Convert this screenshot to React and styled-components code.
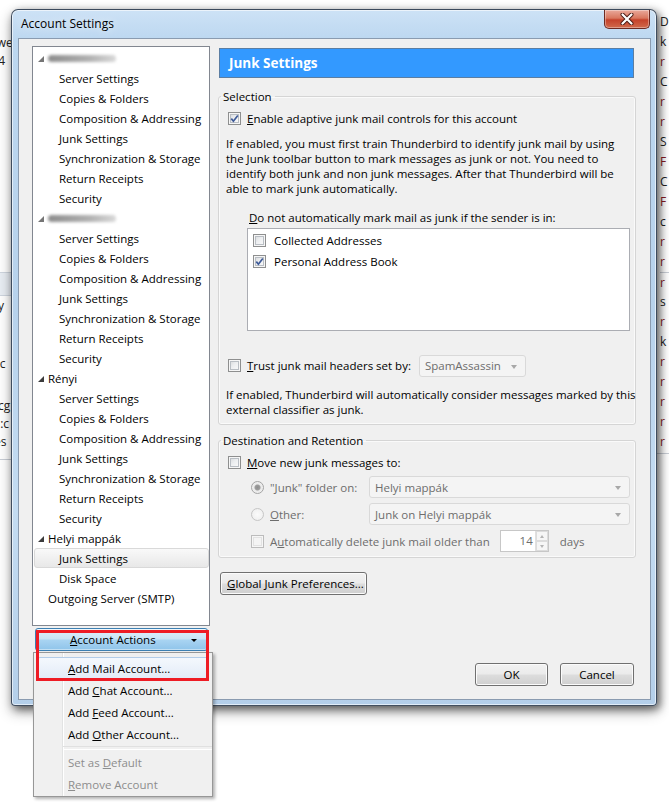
import React from "react";
import styled, { createGlobalStyle } from "styled-components";

const GlobalStyle = createGlobalStyle`
  html, body { margin: 0; padding: 0; background: #fff; }
  body {
    font-family: "Open Sans", "Noto Sans", sans-serif;
    font-size: 11.5px;
    color: #000;
  }
  * { box-sizing: border-box; }
`;

const Desktop = styled.div`
  position: relative;
  width: 669px;
  height: 804px;
  overflow: hidden;
  background: #fff;
  display: flex;
  justify-content: space-between;
`;

const PeekLeft = styled.div`
  width: 14px;
  height: 460px;
  padding-top: 34px;
  font-size: 12px;
  line-height: 18px;
  color: #222;
  overflow: hidden;
  white-space: nowrap;
  border-bottom: 1px solid #c9ced6;
`;

const PeekLine = styled.div`
  margin-top: ${(p) => p.$gap || 0}px;
  height: 18px;
  text-indent: ${(p) => p.$shift || -2}px;
  ${(p) => p.$band && "background: #e9eef4; border-top: 1px solid #cfd6df; border-bottom: 1px solid #cfd6df; height: 24px;"}
`;

const PeekRight = styled.div`
  width: 12px;
  height: 454px;
  padding: 12px 0 0 3px;
  line-height: 20px;
  font-size: 12px;
  overflow: hidden;
  border-bottom: 1px solid #c9ced6;
`;

const PeekLetter = styled.div`
  height: 20px;
  color: ${(p) => (p.$red ? "#8a1c24" : "#222")};
  ${(p) => p.$rule && "border-top: 1px solid #c9ced6;"}
`;

const Window = styled.div`
  position: absolute;
  left: 11px;
  top: 9px;
  width: 646px;
  height: 697px;
  border: 1px solid rgba(20, 30, 45, 0.75);
  border-radius: 7px 7px 4px 4px;
  background: linear-gradient(
    to bottom,
    #cde2f6 0px,
    #bcd7f0 30px,
    #b7d2ec 300px,
    #c4dcf2 500px,
    #b4cfea 100%
  );
  box-shadow: 3px 3px 8px rgba(0, 0, 0, 0.55), 0 6px 14px rgba(0, 0, 0, 0.3),
    inset 0 0 0 1px rgba(255, 255, 255, 0.6);
  display: flex;
  flex-direction: column;
  padding: 0 5px 5px 6px;
`;

const TitleBar = styled.div`
  height: 28px;
  display: flex;
  align-items: center;
  padding-left: 3px;
  padding-bottom: 2px;
`;

const Title = styled.div`
  font-size: 12px;
  color: #000;
  text-shadow: 0 0 8px rgba(255, 255, 255, 0.9);
`;

const CloseButton = styled.div`
  position: absolute;
  top: 0;
  right: 6px;
  width: 46px;
  height: 19px;
  border: 1px solid #6d2a22;
  border-top: none;
  border-radius: 0 0 5px 5px;
  background: linear-gradient(to bottom, #e9a99b 0%, #d9775f 45%, #c5422b 55%, #d16a4c 100%);
  box-shadow: inset 0 0 0 1px rgba(255, 255, 255, 0.35);
  display: flex;
  align-items: center;
  justify-content: center;
`;

const Client = styled.div`
  flex: 1;
  border: 1px solid #8a9bb0;
  background: #f0f0f0;
  display: flex;
  gap: 8px;
  padding: 7px 14px 13px 13px;
`;

const LeftCol = styled.div`
  width: 178px;
  flex: none;
  display: flex;
  flex-direction: column;
`;

const Tree = styled.div`
  height: 580px;
  background: #fff;
  border: 1px solid #828790;
  padding-top: 1px;
  overflow: hidden;
`;

const TreeRow = styled.div`
  height: 20px;
  display: flex;
  align-items: center;
  padding-left: ${(p) => (p.$child ? 25 : 4)}px;
  margin: 0 0 0 1px;
  white-space: nowrap;
  ${(p) =>
    p.$selected &&
    `
    background: linear-gradient(to bottom, #f9f9f9, #e8e8e8);
    border: 1px solid #d9d9d9;
    border-radius: 3px;
    padding-left: 24px;
  `}
`;

const Twisty = styled.svg`
  width: 6px;
  height: 6px;
  margin-right: 4px;
  margin-top: 2px;
  flex: none;
  ${(p) => p.$blur && "filter: blur(0.6px); opacity: 0.7;"}
`;

const BlurName = styled.span`
  display: inline-block;
  width: 68px;
  height: 7px;
  border-radius: 4px;
  background: linear-gradient(to right, #8c8c8c, #b0b0b0 60%, #d8d8d8);
  filter: blur(1.8px);
`;

const PlainTop = styled.div`
  height: 20px;
  display: flex;
  align-items: center;
  padding-left: 15px;
`;

const ActionsButton = styled.div`
  height: 23px;
  margin: 2px 2px 0 3px;
  border: 1px solid #3c7fb1;
  border-radius: 3px;
  background: linear-gradient(to bottom, #e3f1fb 0%, #c9e4f6 48%, #a9d4f2 52%, #8fc4ea 100%);
  box-shadow: inset 0 0 0 1px rgba(255, 255, 255, 0.45);
  display: flex;
  align-items: center;
  padding-left: 34px;
  position: relative;
`;

const DropArrow = styled.span`
  position: absolute;
  right: 10px;
  top: 10px;
  width: 0;
  height: 0;
  border-left: 3px solid transparent;
  border-right: 3px solid transparent;
  border-top: 3px solid #000;
`;

const RightCol = styled.div`
  width: 418px;
  flex: none;
  display: flex;
  flex-direction: column;
`;

const PaneHeader = styled.div`
  height: 30px;
  margin: 2px 2px 0 1px;
  background: #3399ff;
  border: 1px solid #5b7ea3;
  color: #fff;
  font-weight: 700;
  font-size: 13.5px;
  display: flex;
  align-items: center;
  padding-left: 9px;
`;

const Group = styled.fieldset`
  margin: ${(p) => p.$top}px 0 0 0;
  padding: 0 5px ${(p) => p.$bottom}px 8px;
  border: 1px solid #d5d5d5;
  border-radius: 3px;
  box-shadow: inset 0 0 0 1px #fafafa;
  min-width: 0;
`;

const Legend = styled.legend`
  padding: 0 3px 0 2px;
  margin-left: -6px;
  line-height: 15px;
`;

const Row = styled.div`
  display: flex;
  align-items: center;
  height: ${(p) => p.$h || 20}px;
  margin-top: ${(p) => p.$top || 0}px;
  margin-left: ${(p) => p.$indent || 0}px;
  gap: 6px;
  white-space: nowrap;
`;

const Para = styled.div`
  margin-top: ${(p) => p.$top}px;
  margin-left: -1px;
  line-height: 15px;
  white-space: nowrap;
`;

const Check = styled.span`
  flex: none;
  width: 13px;
  height: 13px;
  margin-left: ${(p) => p.$ml || 0}px;
  border: 1px solid ${(p) => (p.$disabled ? "#bcbcbc" : "#8e8f8f")};
  background: ${(p) =>
    p.$disabled
      ? "#f4f4f4"
      : "linear-gradient(135deg, #d2d4d6 0%, #eceef0 45%, #fdfdfd 100%)"};
  box-shadow: inset 0 0 0 1px #f6f6f6, inset 0 0 0 2px ${(p) => (p.$disabled ? "#e2e2e2" : "#b9bec4")};
  display: inline-flex;
  align-items: center;
  justify-content: center;
`;

const Radio = styled.span`
  flex: none;
  width: 13px;
  height: 13px;
  border-radius: 50%;
  border: 1px solid ${(p) => (p.$checked ? "#a4a4a4" : "#c6c6c6")};
  background: ${(p) =>
    p.$checked
      ? "radial-gradient(circle, #8e8e8e 0, #9c9c9c 2.5px, #e9e9e9 3.5px, #f6f6f6 100%)"
      : "radial-gradient(circle, #fbfbfb 0, #ececec 100%)"};
`;

const AddressList = styled.div`
  height: 103px;
  margin: 3px 0 0 20px;
  background: #fff;
  border: 1px solid #abadb3;
  padding: 1px 0 0 5px;
`;

const ListItem = styled.div`
  height: 21px;
  display: flex;
  align-items: center;
  gap: 8px;
`;

const Select = styled.div`
  width: ${(p) => (p.$w ? `${p.$w}px` : "auto")};
  flex: ${(p) => (p.$w ? "none" : 1)};
  margin-left: ${(p) => p.$ml || 0}px;
  height: 22px;
  border: 1px solid #d9d9d9;
  border-radius: 3px;
  background: #f4f4f4;
  color: #6d6d6d;
  display: flex;
  align-items: center;
  padding-left: 5px;
  position: relative;
`;

const SelArrow = styled.span`
  position: absolute;
  right: 8px;
  top: 50%;
  margin-top: -1px;
  border-left: 3.5px solid transparent;
  border-right: 3.5px solid transparent;
  border-top: 4px solid #a8a8a8;
`;

const OptionGrid = styled.div`
  display: grid;
  grid-template-columns: 118px 1fr;
  row-gap: 5px;
  margin: 4px 0 0 24px;
  color: #6d6d6d;
`;

const GridCell = styled.div`
  display: flex;
  align-items: center;
  gap: 6px;
  white-space: nowrap;
  ${(p) => p.$span && "grid-column: 1 / span 2;"}
`;

const NumberBox = styled.div`
  width: 49px;
  height: 22px;
  margin-left: 4px;
  border: 1px solid #c7c7c7;
  background: #fff;
  display: flex;
`;

const NumberText = styled.div`
  flex: 1;
  text-align: right;
  padding-right: 2px;
  line-height: 20px;
  color: #6d6d6d;
`;

const Spinner = styled.div`
  width: 13px;
  display: flex;
  flex-direction: column;
  border-left: 1px solid #e0e0e0;
`;

const SpinHalf = styled.div`
  flex: 1;
  display: flex;
  align-items: center;
  justify-content: center;
  background: #f6f6f6;
  border: 1px solid #dcdcdc;
  &::after {
    content: "";
    border-left: 2.5px solid transparent;
    border-right: 2.5px solid transparent;
    ${(p) => (p.$up ? "border-bottom" : "border-top")}: 3px solid #b4b4b4;
  }
`;

const Days = styled.span`
  margin-left: 5px;
`;

const PushButton = styled.div`
  width: ${(p) => p.$w}px;
  height: 23px;
  margin-top: ${(p) => p.$top || 0}px;
  margin-left: ${(p) => p.$left || 0}px;
  border: 1px solid #707070;
  border-radius: 3px;
  background: linear-gradient(to bottom, #f2f2f2 0%, #ebebeb 48%, #dddddd 52%, #cfcfcf 100%);
  box-shadow: inset 0 0 0 1px #fbfbfb;
  display: flex;
  align-items: center;
  justify-content: ${(p) => (p.$start ? "flex-start" : "center")};
  padding-left: ${(p) => (p.$start ? 6 : 0)}px;
  white-space: nowrap;
`;

const Footer = styled.div`
  margin-top: auto;
  display: flex;
  justify-content: flex-end;
  gap: 12px;
  padding-right: 2px;
`;

const Menu = styled.div`
  position: absolute;
  left: 33px;
  top: 652px;
  width: 180px;
  height: 145px;
  border: 1px solid #979797;
  background: linear-gradient(
      to right,
      transparent 28px,
      #e2e3e3 28px,
      #e2e3e3 29px,
      #ffffff 29px,
      #ffffff 30px,
      transparent 30px
    ),
    #f0f0f0;
  box-shadow: 2px 2px 3px rgba(0, 0, 0, 0.3);
  padding: 4px 0 0 0;
`;

const MenuItem = styled.div`
  height: 22px;
  margin: 0 3px;
  padding-left: 30px;
  display: flex;
  align-items: center;
  white-space: nowrap;
  border: 1px solid transparent;
  border-radius: 3px;
  color: ${(p) => (p.$disabled ? "#8d8d8d" : "#000")};
  ${(p) =>
    p.$active &&
    `
    background: linear-gradient(to bottom, #f4f8fd, #e3ecf8);
    border-color: #b3cde9;
  `}
`;

const MenuSep = styled.div`
  height: 6px;
  margin-left: 29px;
  display: flex;
  align-items: center;
  &::after {
    content: "";
    flex: 1;
    height: 2px;
    border-top: 1px solid #e0e0e0;
    border-bottom: 1px solid #ffffff;
  }
`;

const Highlight = styled.div`
  position: absolute;
  left: 36px;
  top: 630px;
  width: 173px;
  height: 51px;
  border: 3px solid #ee1c25;
  pointer-events: none;
`;

const CheckMark = () => (
  <svg width="9" height="9" viewBox="0 0 9 9">
    <path d="M1.3 4.6 L3.4 7.2 L7.8 1.4" fill="none" stroke="#3e5a98" strokeWidth="1.7" />
  </svg>
);

const Tw = ({ blur }) => (
  <Twisty viewBox="0 0 6 6" $blur={blur}>
    <polygon points="6,0 6,6 0,6" fill="#3c3c3c" />
  </Twisty>
);

const subItems = [
  "Server Settings",
  "Copies & Folders",
  "Composition & Addressing",
  "Junk Settings",
  "Synchronization & Storage",
  "Return Receipts",
  "Security",
];

const accounts = [
  { name: null, items: subItems },
  { name: null, items: subItems },
  { name: "Rényi", items: subItems },
  { name: "Helyi mappák", items: ["Junk Settings", "Disk Space"], selected: "Junk Settings" },
];

const rightLetters = [
  ["D"], ["k"], ["r", 1], ["C"], ["r", 1], ["r", 1], ["S"], ["F", 1], ["C"], ["F", 1], ["c"],
  ["r", 1], ["r", 1], ["r", 1, 1], ["s"], ["r", 1], ["k"], ["r", 1], ["r", 1], ["r", 1], ["r", 1], ["r", 1],
];

export default function App() {
  return (
    <>
      <GlobalStyle />
      <Desktop>
        <PeekLeft>
          <PeekLine $shift={-9}>swe</PeekLine>
          <PeekLine $shift={-8}>::4</PeekLine>
          <PeekLine $gap={202} $band />
          <PeekLine $gap={1}>y</PeekLine>
          <PeekLine $gap={40} $shift={-6}>cc</PeekLine>
          <PeekLine $gap={24}>cg</PeekLine>
          <PeekLine $shift={-3}>::c</PeekLine>
          <PeekLine $shift={-6}>es</PeekLine>
        </PeekLeft>
        <PeekRight>
          {rightLetters.map(([ch, red, rule], i) => (
            <PeekLetter key={i} $red={red} $rule={rule}>
              {ch}
            </PeekLetter>
          ))}
        </PeekRight>

        <Window>
          <TitleBar>
            <Title>Account Settings</Title>
          </TitleBar>
          <CloseButton>
            <svg width="14" height="12" viewBox="0 0 14 12">
              <path d="M2.5 1.5 L11.5 10.5 M11.5 1.5 L2.5 10.5" stroke="#4a1a14" strokeWidth="4" strokeLinecap="round" />
              <path d="M2.5 1.5 L11.5 10.5 M11.5 1.5 L2.5 10.5" stroke="#ffffff" strokeWidth="2.2" strokeLinecap="round" />
            </svg>
          </CloseButton>
          <Client>
            <LeftCol>
              <Tree>
                {accounts.map((acc, ai) => (
                  <React.Fragment key={ai}>
                    <TreeRow>
                      <Tw blur={!acc.name} />
                      {acc.name ? acc.name : <BlurName />}
                    </TreeRow>
                    {acc.items.map((it) => (
                      <TreeRow key={it} $child $selected={acc.selected === it}>
                        {it}
                      </TreeRow>
                    ))}
                  </React.Fragment>
                ))}
                <PlainTop>Outgoing Server (SMTP)</PlainTop>
              </Tree>
              <ActionsButton>
                <span>
                  <u>A</u>ccount Actions
                </span>
                <DropArrow />
              </ActionsButton>
            </LeftCol>

            <RightCol>
              <PaneHeader>Junk Settings</PaneHeader>

              <Group $top={11} $bottom={7}>
                <Legend>Selection</Legend>
                <Row $top={4}>
                  <Check $ml={1}>
                    <CheckMark />
                  </Check>
                  <span>
                    <u>E</u>nable adaptive junk mail controls for this account
                  </span>
                </Row>
                <Para $top={8}>
                  If enabled, you must first train Thunderbird to identify junk mail by using
                  <br />
                  the Junk toolbar button to mark messages as junk or not. You need to
                  <br />
                  identify both junk and non junk messages. After that Thunderbird will be
                  <br />
                  able to mark junk automatically.
                </Para>
                <Row $top={14} $indent={22} $h={15}>
                  <span>
                    <u>D</u>o not automatically mark mail as junk if the sender is in:
                  </span>
                </Row>
                <AddressList>
                  <ListItem>
                    <Check />
                    Collected Addresses
                  </ListItem>
                  <ListItem>
                    <Check>
                      <CheckMark />
                    </Check>
                    Personal Address Book
                  </ListItem>
                </AddressList>
                <Row $top={23} $h={23}>
                  <Check $ml={1} />
                  <span>
                    <u>T</u>rust junk mail headers set by:
                  </span>
                  <Select $w={107} $ml={2}>
                    SpamAssassin
                    <SelArrow />
                  </Select>
                </Row>
                <Para $top={10}>
                  If enabled, Thunderbird will automatically consider messages marked by this
                  <br />
                  external classifier as junk.
                </Para>
              </Group>

              <Group $top={8} $bottom={5}>
                <Legend>Destination and Retention</Legend>
                <Row $top={4}>
                  <Check $ml={1} />
                  <span>
                    <u>M</u>ove new junk messages to:
                  </span>
                </Row>
                <OptionGrid>
                  <GridCell>
                    <Radio $checked />
                    <span>
                      "<u>J</u>unk" folder on:
                    </span>
                  </GridCell>
                  <Select>
                    Helyi mappák
                    <SelArrow />
                  </Select>
                  <GridCell>
                    <Radio />
                    <span>
                      <u>O</u>ther:
                    </span>
                  </GridCell>
                  <Select>
                    Junk on Helyi mappák
                    <SelArrow />
                  </Select>
                  <GridCell $span>
                    <Check $disabled />
                    <span>
                      A<u>u</u>tomatically delete junk mail older than
                    </span>
                    <NumberBox>
                      <NumberText>14</NumberText>
                      <Spinner>
                        <SpinHalf $up />
                        <SpinHalf />
                      </Spinner>
                    </NumberBox>
                    <Days>days</Days>
                  </GridCell>
                </OptionGrid>
              </Group>

              <PushButton $w={147} $top={14} $left={2} $start>
                <span>
                  <u>G</u>lobal Junk Preferences...
                </span>
              </PushButton>

              <Footer>
                <PushButton $w={73}>OK</PushButton>
                <PushButton $w={74}>Cancel</PushButton>
              </Footer>
            </RightCol>
          </Client>
        </Window>

        <Menu>
          <MenuItem $active>
            <span>
              <u>A</u>dd Mail Account...
            </span>
          </MenuItem>
          <MenuItem>
            <span>
              Add <u>C</u>hat Account...
            </span>
          </MenuItem>
          <MenuItem>
            <span>
              Add <u>F</u>eed Account...
            </span>
          </MenuItem>
          <MenuItem>
            <span>
              Add <u>O</u>ther Account...
            </span>
          </MenuItem>
          <MenuSep />
          <MenuItem $disabled>
            <span>
              Set as <u>D</u>efault
            </span>
          </MenuItem>
          <MenuItem $disabled>
            <span>
              <u>R</u>emove Account
            </span>
          </MenuItem>
        </Menu>
        <Highlight />
      </Desktop>
    </>
  );
}
